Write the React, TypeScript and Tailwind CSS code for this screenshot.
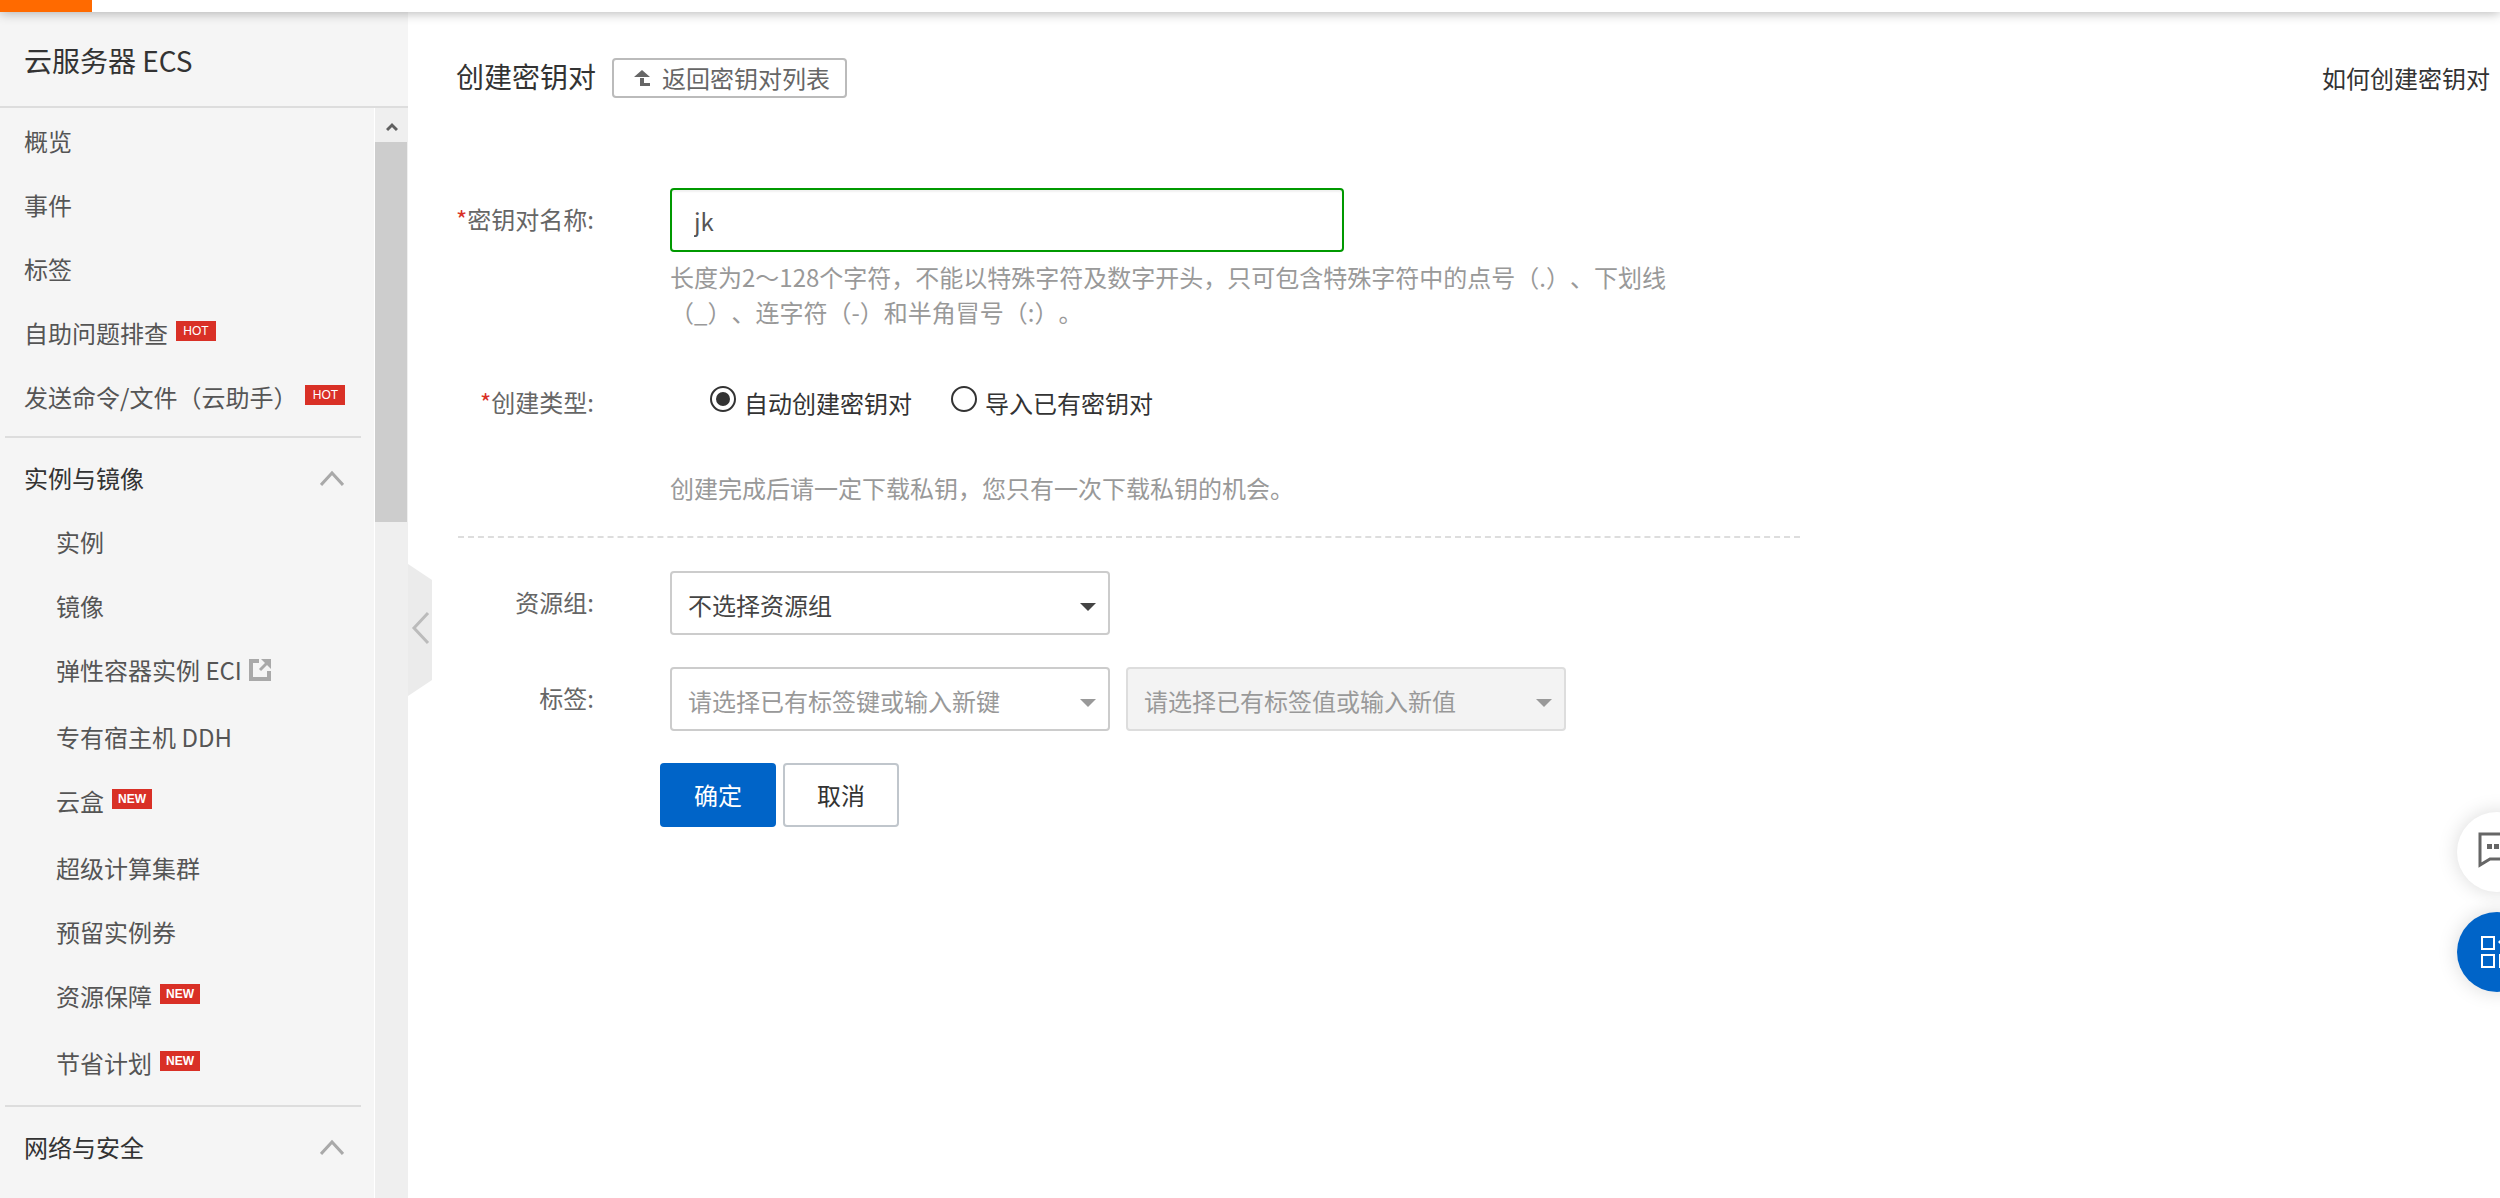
import { useState } from 'react'
import type { ReactNode } from 'react'
import clsx from 'clsx'

interface NavItem {
  label: string
  badge?: 'HOT' | 'NEW'
  external?: boolean
  tall?: boolean
}

const topItems: NavItem[] = [
  { label: '概览' },
  { label: '事件' },
  { label: '标签' },
  { label: '自助问题排查', badge: 'HOT' },
  { label: '发送命令/文件（云助手）', badge: 'HOT' },
]

const instanceItems: NavItem[] = [
  { label: '实例' },
  { label: '镜像' },
  { label: '弹性容器实例 ECI', external: true, tall: true },
  { label: '专有宿主机 DDH' },
  { label: '云盒', badge: 'NEW', tall: true },
  { label: '超级计算集群' },
  { label: '预留实例券' },
  { label: '资源保障', badge: 'NEW', tall: true },
  { label: '节省计划', badge: 'NEW', tall: true },
]

function ExternalIcon() {
  return (
    <svg width="22" height="22" viewBox="0 0 22 22" fill="none" stroke="#a9a9a9" className="ml-[7px]">
      <path d="M10 2H2v18h18v-8" strokeWidth="4" />
      <path d="M12 0h10v10z" fill="#a9a9a9" stroke="none" />
      <path d="M11 11l8-8" strokeWidth="3" />
    </svg>
  )
}

function NavRow({ item, nested }: { item: NavItem; nested?: boolean }) {
  return (
    <li className={item.tall ? 'h-[67px]' : 'h-16'}>
      <a
        href="#"
        className={clsx('flex h-16 items-center pb-[3px] whitespace-nowrap text-[#555]', nested ? 'pl-14' : 'pl-6')}
      >
        {item.label}
        {item.external && <ExternalIcon />}
        {item.badge && (
          <span
            className={clsx(
              'mb-1 ml-2 flex h-5 w-10 items-center justify-center bg-[#d93026] font-["Liberation_Sans"] text-xs text-white',
              item.badge === 'NEW' && 'font-bold'
            )}
          >
            {item.badge}
          </span>
        )}
      </a>
    </li>
  )
}

function NavGroup({ title, items }: { title: string; items: NavItem[] }) {
  const [open, setOpen] = useState(true)

  return (
    <section className="mt-[6px]">
      <hr className="mr-[13px] ml-[5px] border-t-2 border-[#ddd]" />
      <button
        type="button"
        aria-expanded={open}
        onClick={() => setOpen(!open)}
        className="mt-[9px] flex h-16 w-full items-center justify-between pr-[30px] pb-[2px] pl-6 text-[#333]"
      >
        {title}
        <svg
          width="24"
          height="16"
          viewBox="0 0 24 16"
          fill="none"
          stroke="#a9a9a9"
          strokeWidth="3"
          className={open ? '' : 'rotate-180'}
        >
          <path d="M1 15L12 3l11 12" />
        </svg>
      </button>
      {open && (
        <ul>
          {items.map((item) => (
            <NavRow key={item.label} item={item} nested />
          ))}
        </ul>
      )}
    </section>
  )
}

function Sidebar() {
  return (
    <aside className="flex w-[408px] shrink-0 flex-col bg-[#f5f5f5]">
      <h2 className="flex h-24 shrink-0 items-center border-b-2 border-[#ddd] pt-1 pl-6 text-[28px] text-[#333]">
        云服务器 ECS
      </h2>
      <div className="flex min-h-0 flex-1">
        <nav className="min-w-0 flex-1 overflow-hidden pt-[2px]">
          <ul>
            {topItems.map((item) => (
              <NavRow key={item.label} item={item} />
            ))}
          </ul>
          <NavGroup title="实例与镜像" items={instanceItems} />
          <NavGroup title="网络与安全" items={[]} />
        </nav>
        {/* Scroll track */}
        <div aria-hidden="true" className="w-[34px] shrink-0 border-l border-white bg-[#efefef]">
          <div className="flex h-[34px] items-center justify-center pt-1">
            <svg width="12" height="10" viewBox="0 0 12 10" fill="none" stroke="#606060" strokeWidth="3">
              <path d="M1 8l5-5 5 5" />
            </svg>
          </div>
          <div className="mr-px h-[380px] bg-[#cdcdcd]" />
        </div>
      </div>
    </aside>
  )
}

interface FieldProps {
  label: string
  htmlFor?: string
  required?: boolean
  children: ReactNode
}

function Field({ label, htmlFor, required, children }: FieldProps) {
  return (
    <div className="grid grid-cols-[142px_1fr] items-center gap-x-[72px]">
      <label htmlFor={htmlFor} className="pr-1 pb-[3px] text-right whitespace-nowrap text-[#666]">
        {required && <span className="text-[#d93026]">*</span>}
        {label}:
      </label>
      {children}
    </div>
  )
}

interface PickerProps {
  id: string
  text: string
  placeholder?: boolean
  disabled?: boolean
}

function Picker({ id, text, placeholder, disabled }: PickerProps) {
  const muted = placeholder || disabled
  return (
    <div className="relative w-[440px]">
      <select
        id={id}
        aria-label={text}
        disabled={disabled}
        className={clsx(
          'h-16 w-full appearance-none rounded-[4px] border-2 pt-1 pr-12 pl-4 disabled:opacity-100',
          disabled ? 'border-[#ddd] bg-[#f3f3f3]' : 'border-[#ccc] bg-white',
          muted ? 'text-[#999]' : 'text-[#444]'
        )}
      >
        <option>{text}</option>
      </select>
      <svg
        width="16"
        height="8"
        viewBox="0 0 16 8"
        className={clsx(
          'pointer-events-none absolute top-8 right-[14px]',
          muted ? 'text-[#999]' : 'text-[#444]'
        )}
      >
        <path d="M0 0h16L8 8z" fill="currentColor" />
      </svg>
    </div>
  )
}

interface RadioProps {
  label: string
  checked: boolean
  onSelect: () => void
}

function Radio({ label, checked, onSelect }: RadioProps) {
  return (
    <label className="flex items-center gap-2 text-[#333]">
      <input
        type="radio"
        name="create-type"
        checked={checked}
        onChange={onSelect}
        className="mb-2 size-[26px] appearance-none rounded-full border-2 border-[#333] bg-white bg-clip-content p-1 checked:bg-[#333]"
      />
      {label}
    </label>
  )
}

function KeyPairForm() {
  const [name, setName] = useState('jk')
  const [type, setType] = useState<'auto' | 'import'>('auto')

  return (
    <form className="mt-[90px]" onSubmit={(e) => e.preventDefault()}>
      <Field label="密钥对名称" htmlFor="key-name" required>
        <input
          id="key-name"
          type="text"
          value={name}
          onChange={(e) => setName(e.target.value)}
          className="h-16 w-[674px] rounded-[4px] border-2 border-[#090] px-[22px] text-[#555] shadow-[inset_0_2px_2px_rgba(0,0,0,0.06)] outline-none"
        />
      </Field>
      <p className="mt-[7px] ml-[214px] max-w-[1010px] leading-[35px] text-[#999]">
        长度为2～128个字符，不能以特殊字符及数字开头，只可包含特殊字符中的点号（.）、下划线（_）、连字符（-）和半角冒号（:）。
      </p>

      <div className="mt-[52px]">
        <Field label="创建类型" required>
          <div className="flex h-11 items-center gap-[39px] pl-10">
            <Radio label="自动创建密钥对" checked={type === 'auto'} onSelect={() => setType('auto')} />
            <Radio label="导入已有密钥对" checked={type === 'import'} onSelect={() => setType('import')} />
          </div>
        </Field>
      </div>
      <p className="mt-[45px] ml-[214px] leading-[35px] text-[#999]">
        创建完成后请一定下载私钥，您只有一次下载私钥的机会。
      </p>

      <hr className="mt-[31px] ml-[2px] max-w-[1342px] border-t-2 border-dashed border-[#ddd]" />

      <div className="mt-[33px] flex flex-col gap-8">
        <Field label="资源组" htmlFor="resource-group">
          <Picker id="resource-group" text="不选择资源组" />
        </Field>
        <Field label="标签" htmlFor="tag-key">
          <div className="flex gap-4">
            <Picker id="tag-key" text="请选择已有标签键或输入新键" placeholder />
            <Picker id="tag-value" text="请选择已有标签值或输入新值" disabled />
          </div>
        </Field>
        <div className="flex gap-[7px] pl-[204px]">
          <button type="submit" className="h-16 w-[116px] rounded-[4px] bg-[#0064c8] text-white">
            确定
          </button>
          <button type="button" className="h-16 w-[116px] rounded-[4px] border-2 border-[#c0c6cc] bg-white text-[#333]">
            取消
          </button>
        </div>
      </div>
    </form>
  )
}

function FloatingActions() {
  return (
    <div className="fixed top-[812px] -right-[37px] flex flex-col gap-5">
      <button
        type="button"
        aria-label="咨询"
        className="flex size-20 items-center justify-center rounded-full bg-white pb-1 shadow-[0_0_20px_rgba(0,0,0,0.15)]"
      >
        <svg width="38" height="36" viewBox="0 0 38 36" fill="none">
          <path d="M2 2h34v25H12L2 33z" stroke="#666" strokeWidth="3" />
          <path d="M9 12h5v5H9zM16 12h5v5h-5zM23 12h5v5h-5z" fill="#666" />
        </svg>
      </button>
      <button
        type="button"
        aria-label="应用"
        className="flex size-20 items-center justify-center rounded-full bg-[#0064c8] shadow-[0_0_20px_rgba(0,0,0,0.15)]"
      >
        <svg width="32" height="32" viewBox="0 0 32 32" fill="none" stroke="white" strokeWidth="2">
          <path d="M1 1h12v12H1zM1 19h12v12H1zM19 19h12v12H19z" />
          <path d="M17 6l7-7 7 7-7 7z" fill="white" stroke="none" />
        </svg>
      </button>
    </div>
  )
}

export default function App() {
  return (
    <div className='flex h-screen flex-col overflow-hidden bg-white font-["Noto_Sans_CJK_SC",sans-serif] text-2xl [text-spacing-trim:space-all]'>
      <header className="relative z-10 h-3 shrink-0 bg-white shadow-[0_1px_12px_rgba(0,0,0,0.3)]">
        <div className="h-3 w-[92px] bg-[#ff6a00]" />
      </header>

      <div className="flex min-h-0 flex-1">
        <Sidebar />
        <main className="relative min-w-0 flex-1 pt-[46px] pr-[10px] pl-12">
          {/* Collapse handle on the sidebar edge */}
          <button type="button" aria-label="收起菜单" className="absolute top-[552px] left-0">
            <svg width="24" height="132" viewBox="0 0 24 132" fill="none">
              <path d="M0 0l24 16v100L0 132z" fill="#ebebeb" />
              <path d="M20 49L6 64l14 15" stroke="#bbb" strokeWidth="3" />
            </svg>
          </button>

          <div className="flex h-10 items-center">
            <h1 className="mb-1 text-[28px] leading-10 text-[#333]">创建密钥对</h1>
            <button
              type="button"
              className="ml-4 flex h-10 items-center rounded-[4px] border-2 border-[#bbb] pr-[15px] pl-5 text-[#666]"
            >
              <svg width="16" height="16" viewBox="0 0 16 16" fill="#666" className="mr-3">
                <path d="M8 0l8 7H0zM6 8h4v5h6v3H6z" />
              </svg>
              返回密钥对列表
            </button>
            <a href="#" className="ml-auto text-[#333]">
              如何创建密钥对
            </a>
          </div>

          <KeyPairForm />
        </main>
      </div>
      <FloatingActions />
    </div>
  )
}
